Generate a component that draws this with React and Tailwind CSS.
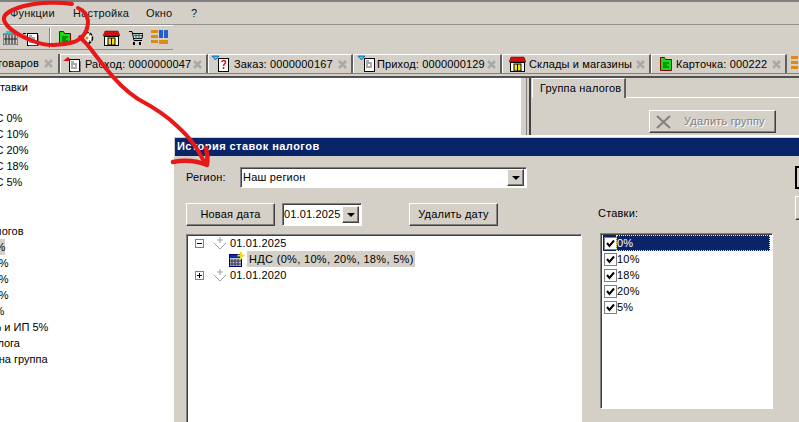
const raised = "bg-[#d4d0c8] border border-t-white border-l-white border-b-[#404040] border-r-[#404040] shadow-[inset_-1px_-1px_0_#808080]";
const sunken = "border border-t-[#808080] border-l-[#808080] border-b-white border-r-white shadow-[inset_1px_1px_0_#404040]";

function Doc({ color, d }) {
  return (
    <svg width="20" height="16" viewBox="0 0 20 16" className="shrink-0">
      <path d={d} fill={color} />
      <rect x="6.5" y="3.5" width="10" height="12" fill="#fff" stroke="#000" />
      <path d="M8 6h3M8 8h6M8 10h2M12 10h2M8 12h6" stroke="#555" fill="none" />
      <path d="M17.5 5v11H8" stroke="#808080" fill="none" />
    </svg>
  );
}
function RedDoc() { return <Doc color="#e01010" d="M0 5 5 1 9 5z" />; }
function CyanDoc({ q }) {
  return (
    <svg width="20" height="18" viewBox="0 0 20 18" className="shrink-0">
      <path d="M1 1h7L4.500 5z" fill="#20d0e0" stroke="#008" strokeWidth=".5" />
      <rect x="7.500" y="3.500" width="10" height="13" fill="#fff" stroke="#000" />
      {q ? <path d="M10.500 7c1-2 4-2 4 0s-2 2-2 4M12.500 12v2" stroke="#e01010" strokeWidth="1.500" fill="none" /> : <path d="M9 6h3M9 8h6M9 10h2M13 10h2M9 12h6" stroke="#555" fill="none" />}
    </svg>
  );
}
function Folder() {
  return (
    <svg width="14" height="16" viewBox="0 0 14 16" className="shrink-0">
      <path d="M1.500 1.500h4l1 2h6v11h-11z" fill="#10e010" stroke="#800000" />
      <path d="M4 7h6M4 9h4M4 11h6" stroke="#004000" />
    </svg>
  );
}
function Shop() {
  return (
    <svg width="17" height="16" viewBox="0 0 17 16" className="shrink-0">
      <path d="M2 1h13l2 5H0z" fill="#d01010" stroke="#600" strokeWidth=".5" />
      <rect x="1.500" y="6.500" width="14" height="9" fill="#fff" stroke="#000" />
      <rect x="5" y="8" width="7" height="7" fill="#f0e020" stroke="#000" />
      <path d="M8.500 8v7" stroke="#000" />
    </svg>
  );
}
function Cart() {
  return (
    <svg width="14" height="16" viewBox="0 0 14 16" className="shrink-0">
      <path d="M0 1.500h3l2 9h8M3.500 3.500H14l-1 5H5" fill="none" stroke="#000" />
      <path d="M5 5.500h8M7 3.500v5M10 3.500v5" stroke="#008080" />
      <rect x="4" y="12" width="2" height="3" fill="#000" />
      <rect x="10" y="12" width="2" height="3" fill="#000" />
    </svg>
  );
}
function Blocks() {
  return (
    <svg width="17" height="16" viewBox="0 0 17 16" className="shrink-0">
      <rect x="0" y="0" width="7" height="3" fill="#e08a10" />
      <rect x="0" y="5" width="7" height="3" fill="#e08a10" />
      <rect x="0" y="10" width="7" height="3" fill="#e08a10" />
      <rect x="8" y="0" width="4" height="8" fill="#2060d0" />
      <rect x="13" y="0" width="4" height="8" fill="#2060d0" />
      <rect x="8" y="10" width="9" height="4" fill="#e08a10" />
    </svg>
  );
}
function Gear() {
  return (
    <svg width="14" height="16" viewBox="0 0 14 16" className="shrink-0">
      <circle cx="7" cy="8" r="5.500" fill="#fff" stroke="#000" strokeWidth="1.500" strokeDasharray="3 1" />
      <circle cx="7" cy="8" r="1.500" fill="#c0a000" />
      <path d="M4 5h1M9 5h1M4 11h1M9 11h1" stroke="#000" />
    </svg>
  );
}
function Grid() {
  return (
    <svg width="15" height="14" viewBox="0 0 15 14" className="shrink-0">
      <rect x="0" y="3" width="15" height="11" fill="#c8c8c8" stroke="#444" />
      <rect x="3" y="0" width="10" height="2" fill="#20d0e0" />
      <path d="M3 4v9M6 4v9M9 4v9M12 4v9M1 8h13" stroke="#222" />
    </svg>
  );
}
function TabClose() {
  return (
    <svg width="9" height="9" viewBox="0 0 9 9" className="shrink-0">
      <path d="M1 1l7 7M8 1 1 8" stroke="#a8a8a8" strokeWidth="2.500" />
    </svg>
  );
}
function Tab({ w, icon, children, gap = "gap-[2px]", pl = "pl-[2px]" }) {
  return (
    <div className={`h-[19px] flex items-center shrink-0 border-t border-l border-t-white border-l-white border-r-2 border-r-[#606060] ${pl} ${gap}`} style={{ width: w }}>
      {icon}
      <span className="whitespace-nowrap tracking-[0.15px]">{children}</span>
      <span className="ml-auto mr-[4px] flex"><TabClose /></span>
    </div>
  );
}
function DropArrow() {
  return (
    <div className={`${raised} w-[17px] h-[17px] flex items-center justify-center shrink-0`}>
      <div className="w-0 h-0 border-x-[4px] border-x-transparent border-t-[4px] border-t-black" />
    </div>
  );
}
function Row({ ml, hl, children }) {
  return (
    <div className="h-[16px] leading-[16px] whitespace-nowrap">
      <span className={`inline-block ${hl ? "bg-[#d4d0c8]" : ""}`} style={{ marginLeft: ml }}>{children}</span>
    </div>
  );
}
function Expander({ plus }) {
  return (
    <svg width="9" height="9" viewBox="0 0 9 9" className="shrink-0">
      <rect x=".5" y=".5" width="8" height="8" fill="#fff" stroke="#808080" />
      <path d={plus ? "M2 4.500h5M4.500 2v5" : "M2 4.500h5"} stroke="#000" />
    </svg>
  );
}
function DateIcon() {
  return (
    <svg width="14" height="13" viewBox="0 0 14 13" className="shrink-0">
      <path d="M7 0v6M4 3h6M1 6l6 6 6-6" stroke="#a0a0a0" fill="none" />
    </svg>
  );
}
function TaxIcon() {
  return (
    <svg width="16" height="15" viewBox="0 0 16 15" className="shrink-0">
      <rect x=".5" y="2.500" width="12" height="12" fill="#b8c0d8" stroke="#000080" />
      <rect x="1" y="3" width="11" height="3" fill="#1030a0" />
      <path d="M3 7v7M6 7v7M9 7v7M1 9h11M1 12h11" stroke="#303030" />
      <path d="M12 0v7M8.500 3.500h7" stroke="#f0e000" strokeWidth="2" />
    </svg>
  );
}
function Check({ label, selected }) {
  return (
    <div className={`h-[16px] flex items-center ${selected ? "bg-[#0a246a]" : ""}`}>
      <div className="w-[9px] h-[9px] ml-[1px] p-[1px] bg-white border border-[#808080] flex items-center justify-center shrink-0 box-content">
        <svg width="9" height="9" viewBox="0 0 9 9"><path d="M1 4l2.500 3L8 1.500" stroke="#000" strokeWidth="2" fill="none" /></svg>
      </div>
      <span className={`flex-1 h-[16px] leading-[14px] ${selected ? "text-white border border-dotted border-[#f0e8a0] -ml-px" : "pt-[1px]"}`}>{label}</span>
    </div>
  );
}

export default function App() {
  return (
    <div className="relative w-[799px] h-[422px] overflow-hidden bg-[#d4d0c8] text-black text-[11px] flex flex-col font-['Liberation_Sans',sans-serif]">
      <div className="h-[2px] bg-[#808080] shrink-0" />
      <div className="h-[23px] shrink-0 flex items-center text-[#101010] tracking-[0.2px] pl-[10px] border-b border-b-[#909090]">
        <span className="w-[63px]">Функции</span>
        <span className="w-[73px]">Настройка</span>
        <span className="w-[45px]">Окно</span>
        <span>?</span>
      </div>
      <div className="h-[25px] shrink-0 w-[173px] flex items-center border-t border-t-white border-b border-b-[#909090] pl-[3px]">
        <Grid />
        <span className="w-[3px]" />
        <Doc color="#000" d="M2 3h3v1H2z" />
        <span className="w-[8px]" />
        <span className="w-[2px] h-[20px] border-l border-l-[#808080] border-r border-r-white" />
        <span className="w-[7px]" />
        <Folder />
        <span className="w-[8px]" />
        <Gear />
        <span className="w-[9px]" />
        <Shop />
        <span className="w-[9px]" />
        <Cart />
        <span className="w-[8px]" />
        <Blocks />
      </div>
      <div className="h-[4px] shrink-0" />
      <div className="h-[19px] shrink-0 flex overflow-hidden">
        <div className="w-[60px] shrink-0 flex items-center justify-end border-r-2 border-r-[#606060] pr-[5px] gap-[5px]">
          <span className="whitespace-nowrap tracking-[0.15px]">товаров</span>
          <TabClose />
        </div>
        <Tab w={148} icon={<RedDoc />}>Расход: 0000000047</Tab>
        <Tab w={145} icon={<CyanDoc q />} gap="gap-[3px]">Заказ: 0000000167</Tab>
        <Tab w={149} icon={<CyanDoc />} gap="gap-0" pl="pl-[3px]">Приход: 0000000129</Tab>
        <Tab w={149} icon={<Shop />} gap="gap-[3px]" pl="pl-[6px]">Склады и магазины</Tab>
        <Tab w={136} icon={<Folder />} gap="gap-[3px]" pl="pl-[7px]">Карточка: 000222</Tab>
        <div className="pl-[4px] flex items-center"><Blocks /></div>
      </div>
      <div className="h-[5px] shrink-0 border-b-2 border-b-[#505050] border-t border-t-[#808080]" />
      <div className="flex-1 flex min-h-0">
        <div className="w-[520px] bg-white shrink-0 pt-[1px]">
          <Row ml={-8}>Ставки</Row>
          <div className="h-[15px]" />
          <Row ml={-20}>НДС 0%</Row>
          <Row ml={-20}>НДС 10%</Row>
          <Row ml={-20}>НДС 20%</Row>
          <Row ml={-20}>НДС 18%</Row>
          <Row ml={-20}>НДС 5%</Row>
          <div className="h-[33px]" />
          <Row ml={-55}>Группа налогов</Row>
          <Row ml={-37} hl>НДС 0%</Row>
          <Row ml={-40}>НДС 10%</Row>
          <Row ml={-40}>НДС 20%</Row>
          <Row ml={-40}>НДС 18%</Row>
          <Row ml={-38}>НДС 5%</Row>
          <Row ml={-41}>НДС 5% и ИП 5%</Row>
          <Row ml={-36}>Без налога</Row>
          <Row ml={-16}>Одна группа</Row>
        </div>
        <div className="w-[11px] shrink-0 border-l border-l-white border-r-2 border-r-[#404040] relative">
          <div className="w-px h-full bg-[#808080] ml-[5px]" />
        </div>
        <div className="flex-1 min-w-0">
          <div className="flex h-[20px] items-stretch pl-[1px]">
            <div className="w-[94px] border-t border-l border-t-white border-l-white border-r-2 border-r-[#606060] pl-[7px] flex items-center tracking-[0.2px]">Группа налогов</div>
            <div className="flex-1 border-b border-b-white" />
          </div>
          <div className={`${raised} ml-[118px] mt-[12px] w-[127px] h-[23px] flex items-center pl-[6px] gap-[13px] border-l-white`}>
            <svg width="15" height="14" viewBox="0 0 15 14">
              <path d="M1 1l13 12M14 1 1 13" stroke="#808080" strokeWidth="2" />
            </svg>
            <span className="text-[#808080] tracking-[0.2px] [text-shadow:1px_1px_0_#fff]">Удалить группу</span>
          </div>
        </div>
      </div>

      <div className="absolute left-[172px] top-[135px] w-[680px] h-[300px] bg-[#d4d0c8] border-t-2 border-l-2 border-t-white border-l-white pl-[1px] pt-[1px]">
        <div className="h-[18px] bg-[#0a246a] text-white font-bold tracking-[0.45px] pl-[2px] leading-[17px]">История ставок налогов</div>
        <div className="flex items-center mt-[11px] ml-[11px] h-[21px]">
          <span className="w-[54px] shrink-0 tracking-[0.2px]">Регион:</span>
          <div className={`${sunken} w-[287px] shrink-0 h-[21px] bg-white flex items-center justify-between px-[2px] tracking-[0.2px]`}>
            <span>Наш регион</span>
            <DropArrow />
          </div>
          <div className="ml-[268px] w-[30px] shrink-0 h-[23px] border-2 border-black bg-[#d4d0c8]" />
        </div>
        <div className="flex relative mt-[15px] ml-[11px] h-[23px]">
          <div className={`${raised} w-[89px] flex items-center justify-center tracking-[0.2px]`}>Новая дата</div>
          <div className={`${sunken} ml-[7px] w-[80px] bg-white flex items-center justify-between pr-[2px] tracking-[0.15px]`}>
            <span className="pl-[1px]">01.01.2025</span>
            <DropArrow />
          </div>
          <div className={`${raised} ml-[47px] w-[89px] flex items-center justify-center tracking-[0.2px]`}>Удалить дату</div>
          <span className="ml-[100px] mt-[2px] tracking-[0.2px]">Ставки:</span>
          <div className={`${raised} absolute left-[609px] -top-[7px] w-[30px] h-[24px]`} />
        </div>
        <div className="flex mt-[8px] ml-[11px]">
          <div className={`${sunken} w-[396px] h-[200px] bg-white pl-[5px] tracking-[0.15px]`}>
            <div className="h-[16px] flex items-center pl-[3px]">
              <Expander /><span className="w-[9px]" /><DateIcon /><span className="w-[3px]" /><span>01.01.2025</span>
            </div>
            <div className="h-[16px] flex items-center pl-[37px]">
              <TaxIcon /><span className="ml-[2px] bg-[#d4d0c8] px-[2px] leading-[16px] w-[168px] whitespace-nowrap tracking-[0.32px]">НДС (0%, 10%, 20%, 18%, 5%)</span>
            </div>
            <div className="h-[16px] flex items-center pl-[3px]">
              <Expander plus /><span className="w-[9px]" /><DateIcon /><span className="w-[3px]" /><span>01.01.2020</span>
            </div>
          </div>
          <div className={`${sunken} ml-[18px] -mt-px w-[173px] h-[176px] bg-white pt-[1px] px-[2px] tracking-[0.2px]`}>
            <Check label="0%" selected />
            <Check label="10%" />
            <Check label="18%" />
            <Check label="20%" />
            <Check label="5%" />
          </div>
        </div>
      </div>

      <svg className="absolute inset-0 pointer-events-none" width="799" height="422" viewBox="0 0 799 422" fill="none" stroke="#e81818" strokeLinecap="round" strokeLinejoin="round">
        <path d="M72 4C60 2 40 2 24 6 10 10 3 14 4 20 7 29 20 36 33 41 45 46 60 46 74 42 84 38 88 30 88 21 87 14 83 10 78 8" strokeWidth="4" />
        <path d="M80 37C88 44 95 55 104 66 114 79 124 90 138 99 153 107 166 115 177 126 188 136 197 146 205 164" strokeWidth="4" />
        <path d="M173 162C184 160 197 161 207 165 208 158 207 152 206 148" strokeWidth="4.500" />
      </svg>
    </div>
  );
}
